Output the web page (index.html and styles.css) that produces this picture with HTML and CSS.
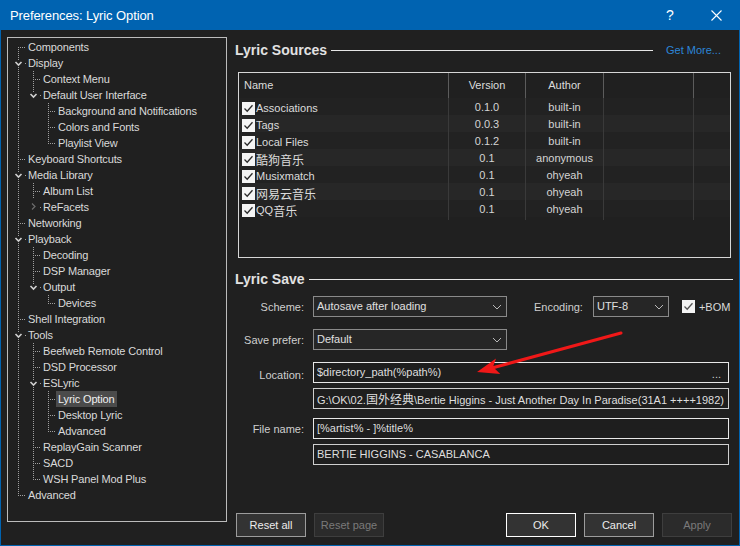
FILE: index.html
```html
<!DOCTYPE html>
<html>
<head>
<meta charset="utf-8">
<title>Preferences: Lyric Option</title>
<link rel="stylesheet" href="styles.css">
</head>
<body>
<div class="window">
  <div class="titlebar">
    <span class="title">Preferences: Lyric Option</span>
    <span class="tb-btn help">?</span>
    <span class="tb-btn close"><svg width="11" height="11" viewBox="0 0 11 11"><path d="M0.5 0.5 L10.5 10.5 M10.5 0.5 L0.5 10.5" stroke="#ffffff" stroke-width="1.1" fill="none"/></svg></span>
  </div>
  <div class="client">
    <div class="tree">
      <div class="row"><span class="c f"></span><span class="lbl">Components</span></div>
      <div class="row"><span class="c xd"><svg class="chev" viewBox="0 0 15 16"><path d="M4.5 7 L7.5 10 L10.5 7"/></svg></span><span class="lbl">Display</span></div>
      <div class="row"><span class="c v"></span><span class="c t"></span><span class="lbl">Context Menu</span></div>
      <div class="row"><span class="c v"></span><span class="c xu"><svg class="chev" viewBox="0 0 15 16"><path d="M4.5 7 L7.5 10 L10.5 7"/></svg></span><span class="lbl">Default User Interface</span></div>
      <div class="row"><span class="c v"></span><span class="c"></span><span class="c t"></span><span class="lbl">Background and Notifications</span></div>
      <div class="row"><span class="c v"></span><span class="c"></span><span class="c t"></span><span class="lbl">Colors and Fonts</span></div>
      <div class="row"><span class="c v"></span><span class="c"></span><span class="c l"></span><span class="lbl">Playlist View</span></div>
      <div class="row"><span class="c t"></span><span class="lbl">Keyboard Shortcuts</span></div>
      <div class="row"><span class="c xd"><svg class="chev" viewBox="0 0 15 16"><path d="M4.5 7 L7.5 10 L10.5 7"/></svg></span><span class="lbl">Media Library</span></div>
      <div class="row"><span class="c v"></span><span class="c t"></span><span class="lbl">Album List</span></div>
      <div class="row"><span class="c v"></span><span class="c xr"><svg class="chev dim" viewBox="0 0 15 16"><path d="M6 4.5 L9 7.5 L6 10.5"/></svg></span><span class="lbl">ReFacets</span></div>
      <div class="row"><span class="c t"></span><span class="lbl">Networking</span></div>
      <div class="row"><span class="c xd"><svg class="chev" viewBox="0 0 15 16"><path d="M4.5 7 L7.5 10 L10.5 7"/></svg></span><span class="lbl">Playback</span></div>
      <div class="row"><span class="c v"></span><span class="c t"></span><span class="lbl">Decoding</span></div>
      <div class="row"><span class="c v"></span><span class="c t"></span><span class="lbl">DSP Manager</span></div>
      <div class="row"><span class="c v"></span><span class="c xu"><svg class="chev" viewBox="0 0 15 16"><path d="M4.5 7 L7.5 10 L10.5 7"/></svg></span><span class="lbl">Output</span></div>
      <div class="row"><span class="c v"></span><span class="c"></span><span class="c l"></span><span class="lbl">Devices</span></div>
      <div class="row"><span class="c t"></span><span class="lbl">Shell Integration</span></div>
      <div class="row"><span class="c xd"><svg class="chev" viewBox="0 0 15 16"><path d="M4.5 7 L7.5 10 L10.5 7"/></svg></span><span class="lbl">Tools</span></div>
      <div class="row"><span class="c v"></span><span class="c t"></span><span class="lbl">Beefweb Remote Control</span></div>
      <div class="row"><span class="c v"></span><span class="c t"></span><span class="lbl">DSD Processor</span></div>
      <div class="row"><span class="c v"></span><span class="c xd"><svg class="chev" viewBox="0 0 15 16"><path d="M4.5 7 L7.5 10 L10.5 7"/></svg></span><span class="lbl">ESLyric</span></div>
      <div class="row"><span class="c v"></span><span class="c v"></span><span class="c t"></span><span class="lbl sel">Lyric Option</span></div>
      <div class="row"><span class="c v"></span><span class="c v"></span><span class="c t"></span><span class="lbl">Desktop Lyric</span></div>
      <div class="row"><span class="c v"></span><span class="c v"></span><span class="c l"></span><span class="lbl">Advanced</span></div>
      <div class="row"><span class="c v"></span><span class="c t"></span><span class="lbl">ReplayGain Scanner</span></div>
      <div class="row"><span class="c v"></span><span class="c t"></span><span class="lbl">SACD</span></div>
      <div class="row"><span class="c v"></span><span class="c l"></span><span class="lbl">WSH Panel Mod Plus</span></div>
      <div class="row"><span class="c l"></span><span class="lbl">Advanced</span></div>
    </div>

    <div class="main">
      <div class="sec-head first">
        <span class="sec-title">Lyric Sources</span>
        <span class="rule"></span>
        <span class="link">Get More...</span>
      </div>

      <div class="list">
        <div class="lhead">
          <div class="hc name">Name</div>
          <div class="hc">Version</div>
          <div class="hc">Author</div>
          <div class="hc"></div>
          <div class="hc"></div>
        </div>
        <div class="lrow">
          <div class="nc"><svg class="cb" viewBox="0 0 13 13"><rect x="0" y="0" width="13" height="13" fill="#f4f4f4"/><path d="M2.5 6.5 L5.2 9.2 L10.5 3.2" stroke="#2a2a2a" stroke-width="1.3" fill="none"/></svg>Associations</div>
          <div class="dc">0.1.0</div><div class="dc">built-in</div><div class="dc"></div><div class="dc"></div>
        </div>
        <div class="lrow alt">
          <div class="nc"><svg class="cb" viewBox="0 0 13 13"><rect x="0" y="0" width="13" height="13" fill="#f4f4f4"/><path d="M2.5 6.5 L5.2 9.2 L10.5 3.2" stroke="#2a2a2a" stroke-width="1.3" fill="none"/></svg>Tags</div>
          <div class="dc">0.0.3</div><div class="dc">built-in</div><div class="dc"></div><div class="dc"></div>
        </div>
        <div class="lrow">
          <div class="nc"><svg class="cb" viewBox="0 0 13 13"><rect x="0" y="0" width="13" height="13" fill="#f4f4f4"/><path d="M2.5 6.5 L5.2 9.2 L10.5 3.2" stroke="#2a2a2a" stroke-width="1.3" fill="none"/></svg>Local Files</div>
          <div class="dc">0.1.2</div><div class="dc">built-in</div><div class="dc"></div><div class="dc"></div>
        </div>
        <div class="lrow alt">
          <div class="nc"><svg class="cb" viewBox="0 0 13 13"><rect x="0" y="0" width="13" height="13" fill="#f4f4f4"/><path d="M2.5 6.5 L5.2 9.2 L10.5 3.2" stroke="#2a2a2a" stroke-width="1.3" fill="none"/></svg><span class="cjk">酷狗音乐</span></div>
          <div class="dc">0.1</div><div class="dc">anonymous</div><div class="dc"></div><div class="dc"></div>
        </div>
        <div class="lrow">
          <div class="nc"><svg class="cb" viewBox="0 0 13 13"><rect x="0" y="0" width="13" height="13" fill="#f4f4f4"/><path d="M2.5 6.5 L5.2 9.2 L10.5 3.2" stroke="#2a2a2a" stroke-width="1.3" fill="none"/></svg>Musixmatch</div>
          <div class="dc">0.1</div><div class="dc">ohyeah</div><div class="dc"></div><div class="dc"></div>
        </div>
        <div class="lrow alt">
          <div class="nc"><svg class="cb" viewBox="0 0 13 13"><rect x="0" y="0" width="13" height="13" fill="#f4f4f4"/><path d="M2.5 6.5 L5.2 9.2 L10.5 3.2" stroke="#2a2a2a" stroke-width="1.3" fill="none"/></svg><span class="cjk">网易云音乐</span></div>
          <div class="dc">0.1</div><div class="dc">ohyeah</div><div class="dc"></div><div class="dc"></div>
        </div>
        <div class="lrow">
          <div class="nc"><svg class="cb" viewBox="0 0 13 13"><rect x="0" y="0" width="13" height="13" fill="#f4f4f4"/><path d="M2.5 6.5 L5.2 9.2 L10.5 3.2" stroke="#2a2a2a" stroke-width="1.3" fill="none"/></svg>QQ<span class="cjk">音乐</span></div>
          <div class="dc">0.1</div><div class="dc">ohyeah</div><div class="dc"></div><div class="dc"></div>
        </div>
      </div>

      <div class="sec-head second">
        <span class="sec-title">Lyric Save</span>
        <span class="rule"></span>
      </div>

      <div class="frow r-scheme">
        <span class="flbl">Scheme:</span>
        <div class="select s-wide">Autosave after loading<svg class="dd" viewBox="0 0 10 6"><path d="M1 1 L5 5 L9 1"/></svg></div>
        <span class="flbl-enc">Encoding:</span>
        <div class="select s-enc">UTF-8<svg class="dd" viewBox="0 0 10 6"><path d="M1 1 L5 5 L9 1"/></svg></div>
        <svg class="cb bom-cb" viewBox="0 0 13 13"><rect x="0" y="0" width="13" height="13" fill="#f4f4f4"/><path d="M2.5 6.5 L5.2 9.2 L10.5 3.2" stroke="#555" stroke-width="1.3" fill="none"/></svg>
        <span class="bom">+BOM</span>
      </div>

      <div class="frow r-prefer">
        <span class="flbl">Save prefer:</span>
        <div class="select s-wide">Default<svg class="dd" viewBox="0 0 10 6"><path d="M1 1 L5 5 L9 1"/></svg></div>
      </div>

      <div class="frow r-loc">
        <span class="flbl low">Location:</span>
        <div class="input bright">$directory_path(%path%)<span class="dots">...</span></div>
      </div>
      <div class="frow r-sub">
        <span class="flbl"></span>
        <div class="input"><span class="clip">G:\OK\02.<span class="cjk">国外经典</span>\Bertie Higgins - Just Another Day In Paradise(31A1 ++++1982)</span></div>
      </div>

      <div class="frow r-file">
        <span class="flbl">File name:</span>
        <div class="input bright">[%artist% - ]%title%</div>
      </div>
      <div class="frow r-sub">
        <span class="flbl"></span>
        <div class="input">BERTIE HIGGINS - CASABLANCA</div>
      </div>

      <div class="buttons">
        <span class="btn">Reset all</span>
        <span class="btn disabled">Reset page</span>
        <span class="spacer"></span>
        <span class="btn default">OK</span>
        <span class="btn">Cancel</span>
        <span class="btn disabled">Apply</span>
      </div>
    </div>
  </div>

  <svg class="arrow" width="740" height="546" viewBox="0 0 740 546">
    <line x1="621" y1="333" x2="492" y2="368" stroke="#f01818" stroke-width="3" stroke-linecap="round"/>
    <polygon points="477,372 496,358.6 493,367 500.3,374" fill="#f01818"/>
  </svg>
</div>
</body>
</html>
```

FILE: styles.css
```css
* { box-sizing: border-box; }

html, body {
  margin: 0;
  padding: 0;
}

body {
  width: 740px;
  height: 546px;
  overflow: hidden;
  background: #202020;
  font-family: "Liberation Sans", Arial, "Noto Sans CJK SC", sans-serif;
  font-size: 11px;
  color: #dadada;
  --dv: repeating-linear-gradient(to bottom, #a0a0a0 0 1px, transparent 1px 2px);
  --dh: repeating-linear-gradient(to right, #a0a0a0 0 1px, transparent 1px 2px);
}

.cjk {
  font-family: "Noto Sans CJK SC", sans-serif;
  font-size: 12px;
}

.window {
  position: relative;
  width: 740px;
  height: 546px;
  display: flex;
  flex-direction: column;
}

/* ---------- title bar ---------- */
.titlebar {
  height: 30px;
  flex: none;
  background: #0063b1;
  color: #ffffff;
  display: flex;
  align-items: center;
  padding-left: 10px;
}
.title {
  flex: 1;
  font-size: 13px;
  letter-spacing: -0.1px;
}
.tb-btn {
  width: 46px;
  height: 30px;
  display: flex;
  align-items: center;
  justify-content: center;
}
.help { font-size: 14px; }
.close { width: 47px; }
.close svg { display: block; }

/* ---------- client ---------- */
.client {
  flex: 1;
  display: flex;
  gap: 8px;
  padding: 7px 6px 8px 6px;
  border: 1px solid #0063b1;
  border-top: 0;
  background: #202020;
}

/* ---------- tree ---------- */
.tree {
  flex: none;
  width: 220px;
  height: 485px;
  border: 1px solid #bcbcbc;
  padding: 1px 0 0 3px;
}
.row {
  display: flex;
  height: 16px;
  line-height: 16px;
  white-space: nowrap;
}
.c {
  flex: none;
  width: 15px;
  height: 16px;
}
.c.v { background: var(--dv) 7px 0 / 1px 16px no-repeat; }
.c.t {
  background:
    var(--dv) 7px 0 / 1px 16px no-repeat,
    var(--dh) 9px 8px / 6px 1px no-repeat;
}
.c.l {
  background:
    var(--dv) 7px 0 / 1px 9px no-repeat,
    var(--dh) 9px 8px / 6px 1px no-repeat;
}
.c.f {
  background:
    var(--dv) 7px 8px / 1px 8px no-repeat,
    var(--dh) 9px 8px / 6px 1px no-repeat;
}
.c.xd {
  background:
    var(--dv) 7px 0 / 1px 5px no-repeat,
    var(--dv) 7px 12px / 1px 4px no-repeat,
    var(--dh) 14px 8px / 1px 1px no-repeat;
}
.c.xu {
  background:
    var(--dv) 7px 0 / 1px 5px no-repeat,
    var(--dh) 14px 8px / 1px 1px no-repeat;
}
.c.xr {
  background: var(--dh) 14px 8px / 1px 1px no-repeat;
}
.chev {
  display: block;
  width: 15px;
  height: 16px;
  fill: none;
  stroke: #d0d0d0;
  stroke-width: 1.6;
}
.chev.dim { stroke: #6c6c6c; stroke-width: 1.2; }

.lbl {
  padding: 0 2px;
  color: #dadada;
  letter-spacing: -0.15px;
}
.lbl.sel {
  background: #4b4b4b;
  color: #f0f0f0;
  padding-right: 3px;
}

/* ---------- main ---------- */
.main {
  flex: 1;
  display: flex;
  flex-direction: column;
  min-width: 0;
}

.sec-head {
  display: flex;
  align-items: center;
  height: 20px;
  flex: none;
}
.sec-head.first { margin-top: 3px; }
.sec-head.second { margin-top: 11px; }
.sec-title {
  font-weight: bold;
  font-size: 14px;
  color: #e2e2e2;
}
.rule {
  flex: 1;
  height: 1px;
  background: #e6e6e6;
  margin-left: 4px;
}
.link {
  color: #2c86d8;
  margin-left: 13px;
  margin-right: 12px;
}

/* ---------- list ---------- */
.list {
  flex: none;
  height: 186px;
  margin: 12px 2px 0 3px;
  border: 1px solid #d6d6d6;
}
.lhead, .lrow {
  display: grid;
  grid-template-columns: 209px 77px 78px 90px 1fr;
}
.lhead { height: 25px; }
.hc {
  line-height: 25px;
  text-align: center;
  border-left: 1px solid #5c5c5c;
  color: #dcdcdc;
}
.hc.name {
  text-align: left;
  border-left: 0;
  padding-left: 5px;
}
.lrow {
  height: 17px;
  line-height: 19px;
  background: #222222;
}
.lrow.alt { background: #272727; }
.nc {
  display: flex;
  align-items: center;
  padding-left: 3px;
  padding-top: 1px;
  white-space: nowrap;
  color: #dcdcdc;
}
.dc {
  text-align: center;
  border-left: 1px solid #3a3a3a;
  color: #d4d4d4;
}
.cb {
  display: block;
  width: 13px;
  height: 13px;
  flex: none;
  margin-right: 1px;
}

/* ---------- form ---------- */
.frow {
  display: flex;
  align-items: center;
  height: 21px;
  flex: none;
}
.r-scheme { margin-top: 7px; }
.r-prefer { margin-top: 12px; }
.r-loc { margin-top: 12px; }
.r-sub { margin-top: 5px; }
.r-file { margin-top: 9px; }

.flbl {
  width: 69px;
  margin-right: 9px;
  text-align: right;
  color: #cfcfcf;
  flex: none;
}
.flbl.low { padding-top: 5px; }
.flbl-enc {
  margin-left: 27px;
  margin-right: 10px;
  color: #cfcfcf;
}
.select {
  position: relative;
  height: 21px;
  line-height: 19px;
  border: 1px solid #8a8a8a;
  background: #262626;
  padding-left: 3px;
  color: #e0e0e0;
  flex: none;
}
.s-wide { width: 194px; }
.s-enc { width: 76px; }
.dd {
  position: absolute;
  right: 4px;
  top: 7px;
  width: 10px;
  height: 6px;
  fill: none;
  stroke: #b8b8b8;
  stroke-width: 1;
}
.bom-cb { margin-left: 13px; margin-right: 4px; }
.bom { color: #dadada; }

.input {
  position: relative;
  flex: none;
  width: 416px;
  height: 21px;
  line-height: 19px;
  border: 1px solid #cfcfcf;
  background: #1e1e1e;
  padding-left: 3px;
  color: #dedede;
  white-space: nowrap;
  overflow: hidden;
}
.input.bright { border-color: #e8e8e8; }
.dots {
  position: absolute;
  right: 7px;
  top: 2px;
  color: #cfcfcf;
}
.clip {
  display: block;
  overflow: hidden;
  white-space: nowrap;
}

/* ---------- buttons ---------- */
.buttons {
  margin-top: auto;
  display: flex;
  gap: 8px;
  padding: 0 1px;
  flex: none;
}
.spacer { flex: 1; }
.btn {
  width: 70px;
  height: 24px;
  line-height: 22px;
  text-align: center;
  border: 1px solid #9c9c9c;
  background: #333333;
  color: #ececec;
}
.btn.default { border-color: #ffffff; }
.btn.disabled {
  border-color: #3e3e3e;
  background: #2b2b2b;
  color: #7a7a7a;
}

/* ---------- annotation ---------- */
.arrow {
  position: absolute;
  left: 0;
  top: 0;
  pointer-events: none;
}
```
